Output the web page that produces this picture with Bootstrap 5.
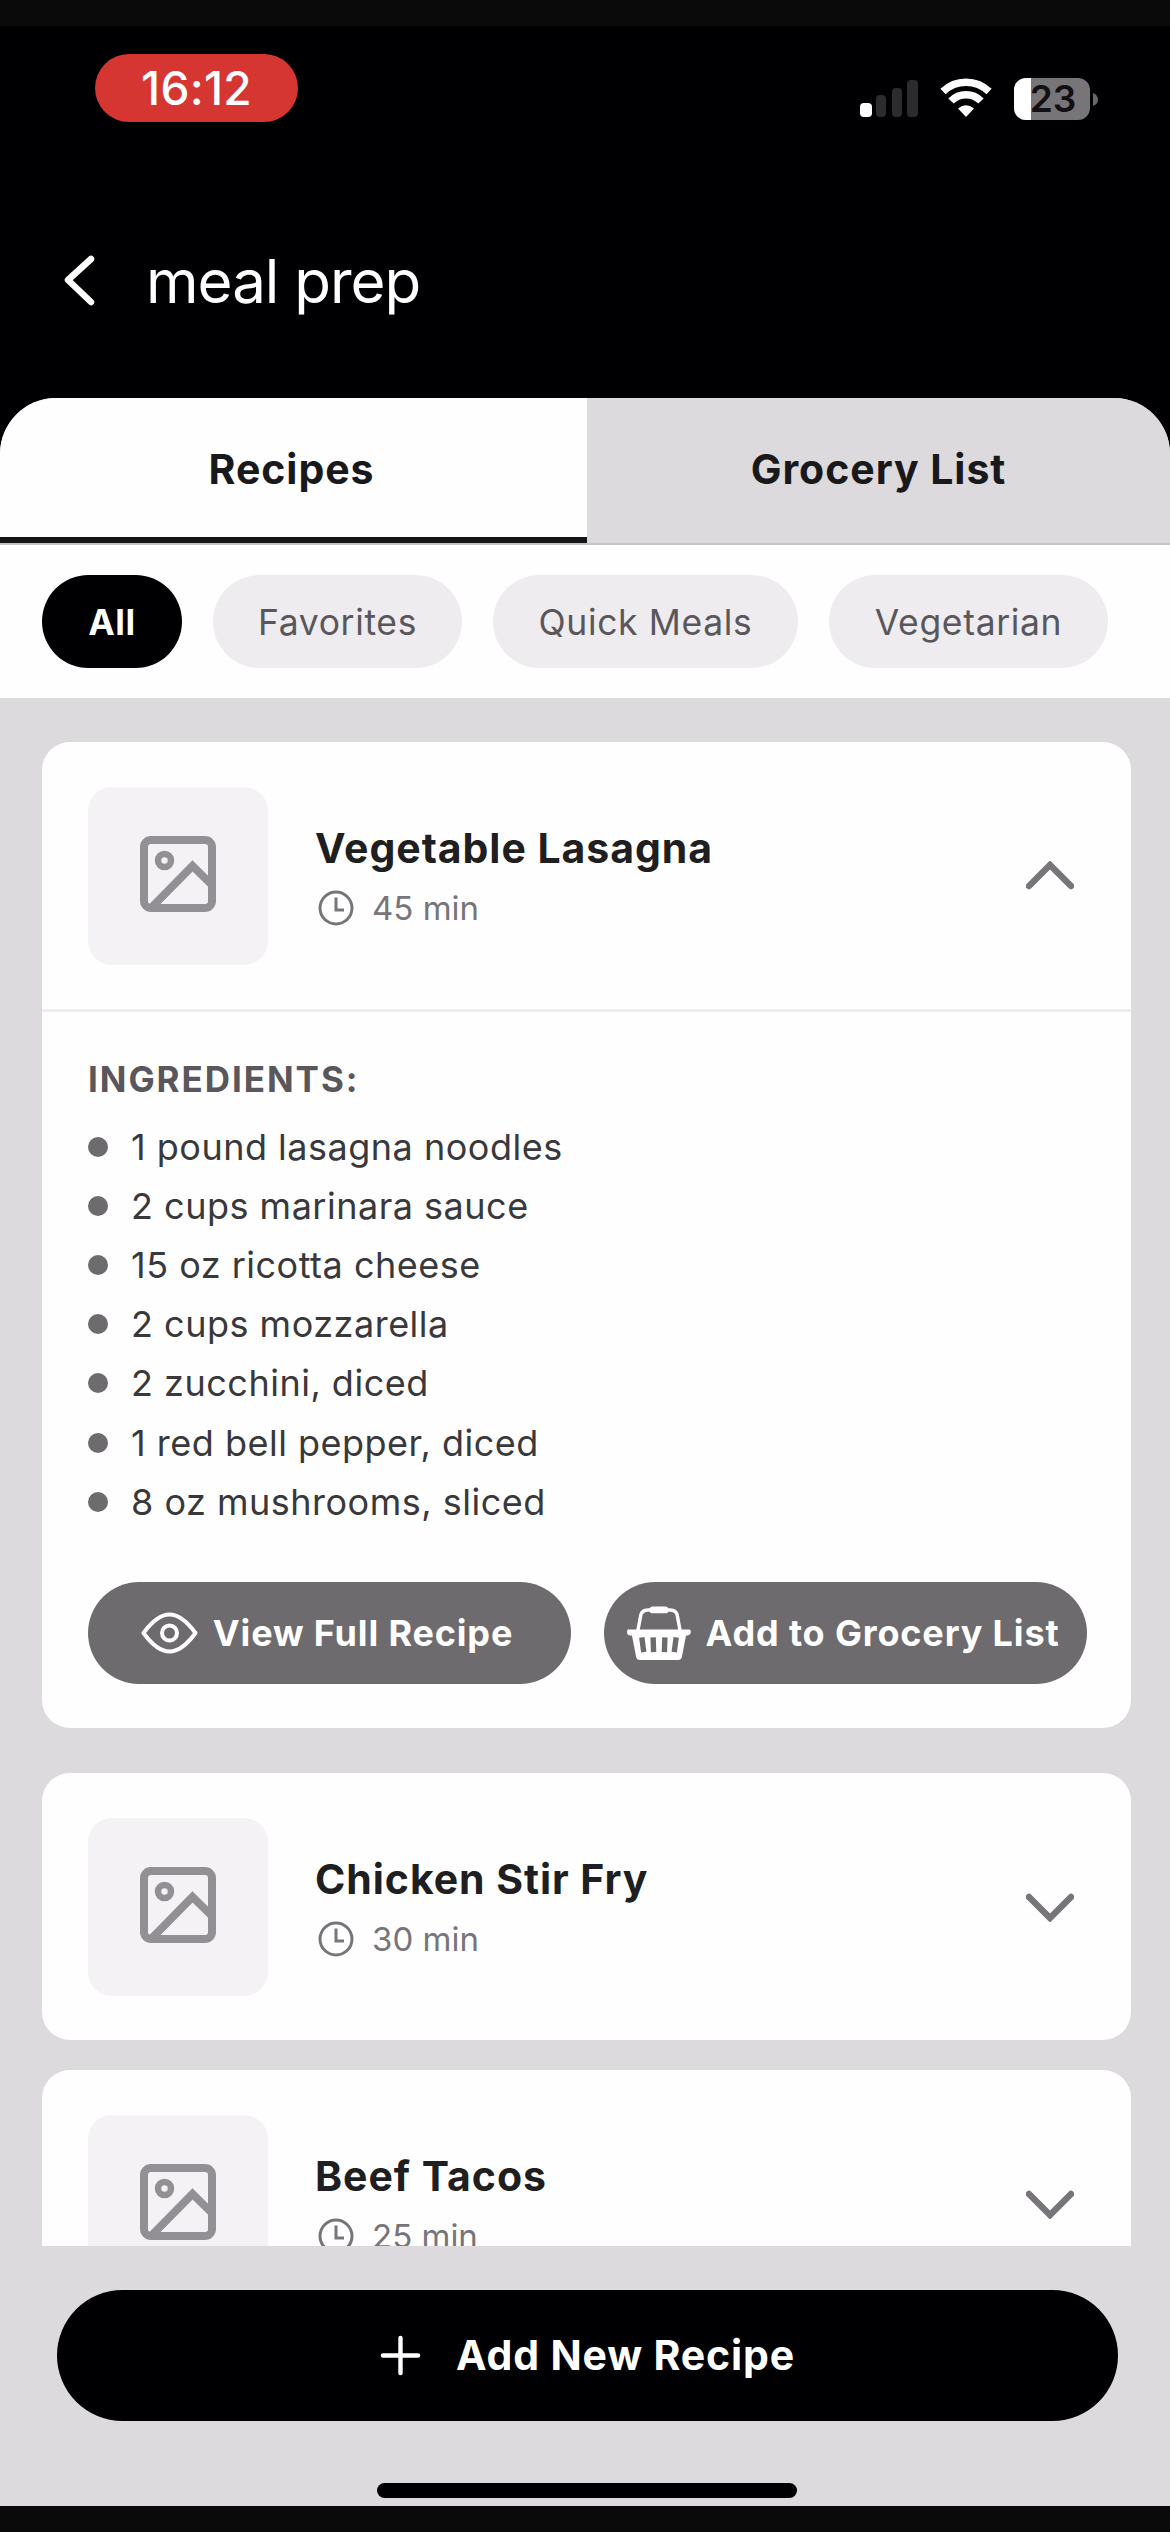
<!DOCTYPE html>
<html lang="en">
<head>
<meta charset="utf-8">
<meta name="viewport" content="width=device-width, initial-scale=1">
<title>meal prep</title>
<link href="https://cdn.jsdelivr.net/npm/bootstrap@5.3.0/dist/css/bootstrap.min.css" rel="stylesheet">
<style>
body{font-family:Inter,"Liberation Sans",sans-serif;background:#0a0a0a;width:1170px;height:2532px;overflow:hidden;color:#1f1e21;line-height:1}
svg{display:block;flex:none}
.phone{margin-top:26px;height:2480px;background:#000002;overflow:hidden}
.statusbar{height:172px;padding:28px 71px 0 95px}
.time-pill{width:203px;height:68px;border-radius:34px;background:#d63631;color:#fff;font-size:46px;font-weight:500;letter-spacing:.3px}
.titlebar{height:200px;padding:53px 0 0 62px;color:#fff}
.titlebar h1{font-size:60px;letter-spacing:-1px;margin:0 0 0 51px;line-height:60px;font-weight:400}
.sheet{height:2108px;background:#dcdadd;border-radius:56px 56px 0 0;overflow:hidden}
.tabs-row{height:147px;border-bottom:2px solid #c6c4c7}
.tabs-row .tab{background:#dcdadd;color:#19181b;font-weight:700;font-size:41px;letter-spacing:.95px;border-bottom:6px solid transparent;padding:4px 4px 0 0}
.tabs-row .tab.active{flex:0 0 587px;background:#fffeff;border-color:#151417}
.filters{height:153px;padding:30px 42px 0;gap:31px;background:#fffeff}
.chip{height:93px;border-radius:47px;background:#eeecef;color:#59575b;font-size:35.5px;letter-spacing:.65px;white-space:nowrap;padding-top:2px}
.chip.active{background:#000002;color:#fff;font-weight:700}
.chip:nth-child(1){width:140px}
.chip:nth-child(2){width:249px}
.chip:nth-child(3){width:305px}
.chip:nth-child(4){width:279px}
.recipes{height:1548px;padding:44px 39px 0 42px;overflow:hidden}
.recipe{background:#fffeff;border-radius:28px;margin-bottom:30px}
.recipe.open{margin-bottom:45px}
.recipe-head{height:267px;padding:0 57px 0 46px}
.thumb{width:180px;height:178px;border-radius:24px;background:#f4f2f5;padding-bottom:3px}
.recipe-info{margin-left:47px}
.recipe h2{font-size:41px;font-weight:700;letter-spacing:.95px;margin:0 0 16px;line-height:48px}
.recipe .time{font-size:33px;color:#777579;line-height:40px;gap:18px;padding-left:3px}
.details{border-top:3px solid #eeecef;height:719px;padding:43px 44px 0 46px}
.details h3{font-size:35px;font-weight:700;letter-spacing:1.95px;color:#59575b;margin:0 0 14px;line-height:48px}
.details li{height:59.2px;font-size:36px;letter-spacing:.5px;color:#39383b;gap:23px}
.dot{width:20px;height:20px;border-radius:50%;background:#6d6b6e}
.actions{gap:33px;margin-top:51px}
.act{flex:1 1 0;height:102px;border-radius:51px;background:#6d6b6e;color:#fff;font-weight:700;font-size:36px;letter-spacing:.85px;gap:15px;padding-right:5px;white-space:nowrap}
.foot{height:260px;padding:44px 52px 0 57px}
.add{height:131px;border-radius:66px;background:#000002;color:#fff;font-weight:700;font-size:41px;letter-spacing:.85px;gap:35px}
.home{width:420px;height:15px;border-radius:8px;background:#000002;margin:62px 0 0 320px}
</style>
<script src="https://cdn.jsdelivr.net/npm/bootstrap@5.3.0/dist/js/bootstrap.bundle.min.js"></script>
</head>
<body>
<svg width="0" height="0" class="position-absolute">
<symbol id="pic" viewBox="0 0 76 76"><g fill="none" stroke="#929094" stroke-width="8"><rect x="4" y="4" width="68" height="68" rx="7"/><circle cx="24.500" cy="24.500" r="6.500" stroke-width="6.500"/><path d="M12 71 52.500 30 73 50"/></g></symbol>
<symbol id="clk" viewBox="0 0 36 36"><g fill="none" stroke="#777579" stroke-width="3"><circle cx="18" cy="18" r="16"/><path d="M18 7.500v12.500h8"/></g></symbol>
<symbol id="down" viewBox="0 0 48 30"><path d="M3 5 24 26 45 5" fill="none" stroke="#777579" stroke-width="6.500" stroke-linecap="round"/></symbol>
</svg>
<div class="phone">
<header>
<div class="statusbar d-flex justify-content-between align-items-start">
<div class="time-pill d-flex align-items-center justify-content-center">16:12</div>
<svg class="mt-4" width="242" height="44" viewBox="0 0 242 44">
<rect x="3" y="25" width="12" height="14" rx="4" fill="#fff"/><g fill="#2c2b2e"><rect x="19" y="17" width="10" height="22" rx="4"/><rect x="35" y="10" width="10" height="29" rx="4"/><rect x="50" y="2" width="11" height="37" rx="4"/></g>
<g fill="none" stroke="#fff" stroke-width="7.500"><path d="M86 13.500a33 33 0 0 1 46 0"/><path d="M94 23a21 21 0 0 1 30 0"/></g><path d="M101 30.500Q109 24 117 30.500L109 39Z" fill="#fff"/>
<rect x="157" y="0" width="76" height="42" rx="12" fill="#777578"/><path d="M174 0h-5a12 12 0 0 0-12 12v18a12 12 0 0 0 12 12h5z" fill="#fff"/><path d="M236 15q5 2 5 6.500t-5 6.500z" fill="#68666a"/>
<text x="196" y="34" text-anchor="middle" font-size="37" font-weight="600" fill="#111013" font-family="Inter, sans-serif">23</text></svg>
</div>
<div class="titlebar d-flex align-items-start">
<svg width="33" height="52" viewBox="0 0 33 52" class="mt-1"><path d="M29 4 6 25l23 22" fill="none" stroke="#fff" stroke-width="6.500" stroke-linecap="round" stroke-linejoin="round"/></svg>
<h1>meal prep</h1>
</div>
</header>
<main class="sheet">
<nav class="tabs-row d-flex">
<div class="tab active d-flex align-items-center justify-content-center">Recipes</div>
<div class="tab flex-fill d-flex align-items-center justify-content-center pe-0">Grocery List</div>
</nav>
<div class="filters d-flex">
<div class="chip active d-flex align-items-center justify-content-center">All</div>
<div class="chip d-flex align-items-center justify-content-center">Favorites</div>
<div class="chip d-flex align-items-center justify-content-center">Quick Meals</div>
<div class="chip d-flex align-items-center justify-content-center">Vegetarian</div>
</div>
<section class="recipes">
<article class="recipe open">
<div class="recipe-head d-flex align-items-center">
<div class="thumb d-flex align-items-center justify-content-center"><svg width="76" height="76"><use href="#pic"/></svg></div>
<div class="recipe-info flex-grow-1"><h2>Vegetable Lasagna</h2><div class="time d-flex align-items-center"><svg width="36" height="36"><use href="#clk"/></svg>45 min</div></div>
<svg width="48" height="30" viewBox="0 0 48 30"><path d="M3 25 24 4l21 21" fill="none" stroke="#777579" stroke-width="6.500" stroke-linecap="round"/></svg>
</div>
<div class="details">
<h3>INGREDIENTS:</h3>
<ul class="list-unstyled m-0">
<li class="d-flex align-items-center"><i class="dot"></i>1 pound lasagna noodles</li>
<li class="d-flex align-items-center"><i class="dot"></i>2 cups marinara sauce</li>
<li class="d-flex align-items-center"><i class="dot"></i>15 oz ricotta cheese</li>
<li class="d-flex align-items-center"><i class="dot"></i>2 cups mozzarella</li>
<li class="d-flex align-items-center"><i class="dot"></i>2 zucchini, diced</li>
<li class="d-flex align-items-center"><i class="dot"></i>1 red bell pepper, diced</li>
<li class="d-flex align-items-center"><i class="dot"></i>8 oz mushrooms, sliced</li>
</ul>
<div class="actions d-flex">
<div class="act d-flex align-items-center justify-content-center"><svg width="57" height="42" viewBox="0 0 57 42"><g fill="none" stroke="#fff" stroke-width="4" stroke-linejoin="round"><path d="M2.500 21C12 8 20 2.500 28.500 2.500S45 8 54.500 21C45 34 37 39.500 28.500 39.500S12 34 2.500 21Z"/><circle cx="28.500" cy="21" r="7.500"/></g></svg>View Full Recipe</div>
<div class="act d-flex align-items-center justify-content-center"><svg width="64" height="55" viewBox="0 0 65 56"><path d="M11 25 14 9Q15.500 4 21 4H44Q49.500 4 51 9L54 25" fill="none" stroke="#fff" stroke-width="3.500"/><rect x="23" y="0.500" width="19" height="7" rx="3" fill="#fff"/><path d="M2 24H63Q65 24 65 26.500T62 30H60L56 51Q55.500 55 52 55H13Q9.500 55 9 51L5 30H3Q0 30 0 26.500T2 24Z" fill="#fff"/><path d="M15 32l2 15M26.500 32l.5 15M38.500 32l-.5 15M50 32l-2 15" stroke="#6d6b6e" stroke-width="5.500"/></svg>Add to Grocery List</div>
</div>
</div>
</article>
<article class="recipe">
<div class="recipe-head d-flex align-items-center">
<div class="thumb d-flex align-items-center justify-content-center"><svg width="76" height="76"><use href="#pic"/></svg></div>
<div class="recipe-info flex-grow-1"><h2>Chicken Stir Fry</h2><div class="time d-flex align-items-center"><svg width="36" height="36"><use href="#clk"/></svg>30 min</div></div>
<svg width="48" height="30"><use href="#down"/></svg>
</div>
</article>
<article class="recipe">
<div class="recipe-head d-flex align-items-center">
<div class="thumb d-flex align-items-center justify-content-center"><svg width="76" height="76"><use href="#pic"/></svg></div>
<div class="recipe-info flex-grow-1"><h2>Beef Tacos</h2><div class="time d-flex align-items-center"><svg width="36" height="36"><use href="#clk"/></svg>25 min</div></div>
<svg width="48" height="30"><use href="#down"/></svg>
</div>
</article>
</section>
<footer class="foot"><div class="add d-flex align-items-center justify-content-center"><svg width="41" height="41" viewBox="0 0 42 42"><path d="M21 3v36M3 21h36" stroke="#fff" stroke-width="4.500" stroke-linecap="round"/></svg>Add New Recipe</div><div class="home"></div></footer>
</main>
</div>
</body>
</html>
